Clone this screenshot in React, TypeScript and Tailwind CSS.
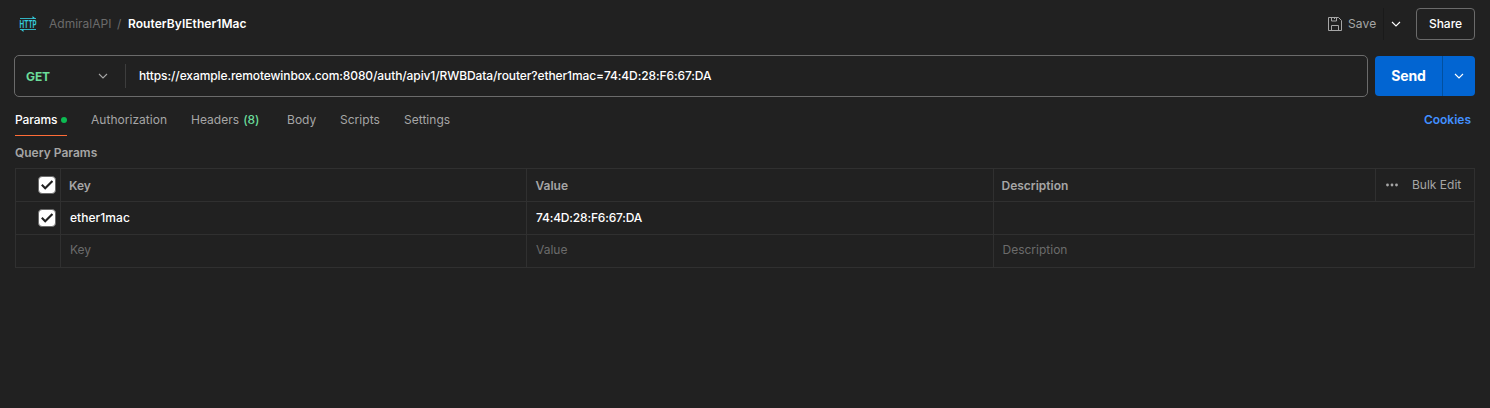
import React from 'react';

function Chevron({ className = '' }: { className?: string }) {
  return (
    <svg width="10" height="6" viewBox="0 0 10 6" fill="none" className={className}>
      <path d="M1 1l4 4 4-4" stroke="currentColor" strokeWidth="1.1" />
    </svg>
  );
}

function HttpIcon() {
  return (
    <svg width="18" height="18" viewBox="0 0 18 18" fill="none" className="overflow-visible text-[#35cbdc]">
      <path d="M1 3.5h16M1 14.5h16" stroke="currentColor" strokeWidth="1" opacity=".85" />
      <path d="M13.5 1l3 2.5h-3zM4.5 17l-3-2.5h3z" fill="currentColor" />
      <text x=".6" y="12.8" textLength="17" lengthAdjust="spacingAndGlyphs" fill="currentColor" fontSize="10.6" fontWeight="700" fontFamily="Inter, sans-serif">HTTP</text>
    </svg>
  );
}

function SaveIcon() {
  return (
    <svg width="14" height="14" viewBox="0 0 14 14" fill="none" stroke="#a6a6a6">
      <path d="M.5 .5h10l3 3v10H.5zM3.5 .5v3.5h5V.5M3.5 13.5v-5h7v5M6.5 .5v1.5" />
    </svg>
  );
}

function Checkbox() {
  return (
    <span role="checkbox" aria-checked="true" className="flex size-[18px] items-center justify-center rounded-[4px] border border-[#6b6b6b] bg-white">
      <svg width="12" height="10" viewBox="0 0 12 10" fill="none">
        <path d="M.8 4.8l3.4 3.4L11.4 1" stroke="#212121" strokeWidth="2.1" />
      </svg>
    </span>
  );
}

const tabs = [
  { label: 'Authorization', width: 'w-[100px]' },
  { label: 'Headers', count: 8, width: 'w-24' },
  { label: 'Body', width: 'w-[53px]' },
  { label: 'Scripts', width: 'w-16' },
  { label: 'Settings', width: 'w-16' },
];

export default function App() {
  return (
    <div className="h-[408px] w-[1490px] bg-[#212121] font-['Inter',sans-serif] text-xs text-[#a6a6a6]">
      <header className="flex h-12 items-center pr-[15px] pl-[19px]">
        <HttpIcon />
        <span className="ml-3 w-[68px] text-[#6b6b6b]">AdmiralAPI</span>
        <span className="w-[11px] text-[#6b6b6b]">/</span>
        <h1 className="font-semibold tracking-[0.05px] text-white">RouterByIEther1Mac</h1>
        <div className="ml-auto flex h-8 items-center">
          <SaveIcon />
          <span className="ml-1.5 w-[35px] tracking-[0.15px]">Save</span>
          <span className="h-8 w-px bg-[#1a1a1a]" />
          <Chevron className="mr-[15px] ml-[7px] text-white" />
          <button className="h-8 w-[59px] rounded-[4px] border border-[#6b6b6b] font-medium text-white">Share</button>
        </div>
      </header>

      <div className="flex items-center gap-[7px] pt-[7px] pl-3.5">
        <div className="flex h-[42px] w-[1354px] items-center rounded-[5px] border border-[#6b6b6b]">
          <span className="w-[83px] pt-px pl-[11px] font-bold tracking-[-0.1px] text-[#6bdd9a]">GET</span>
          <Chevron className="mr-[17px]" />
          <span className="h-6 w-px bg-[#3d3d3d]" />
          <span className="pl-[13px] font-medium tracking-[-0.1px] text-white">https://example.remotewinbox.com:8080/auth/apiv1/RWBData/router?ether1mac=74:4D:28:F6:67:DA</span>
        </div>
        <div className="flex h-10 w-[100px] items-center overflow-hidden rounded-[4px] bg-[#0265d2] text-white">
          <button className="w-[67px] text-sm font-bold tracking-[-0.15px]">Send</button>
          <span className="h-10 w-px bg-[#02509f]" />
          <Chevron className="ml-[11px]" />
        </div>
      </div>

      <nav className="flex h-[39px] items-end pr-[19px] pl-[15px]">
        <div className="mr-6 flex h-8 w-[52px] items-center justify-between border-b border-[#ff6c37] font-medium tracking-[-0.1px] text-white">
          Params
          <span className="size-1.5 rounded-full bg-[#0cbb52]" />
        </div>
        {tabs.map((tab) => (
          <div key={tab.label} className={`flex h-8 items-center border-b border-transparent tracking-[0.03px] ${tab.width}`}>
            {tab.label}
            {tab.count && <span className="ml-1 font-medium tracking-[-0.15px] text-[#6bdd9a]">({tab.count})</span>}
          </div>
        ))}
        <span className="ml-auto flex h-8 items-center border-b border-transparent font-semibold text-[#4290ff]">Cookies</span>
      </nav>

      <h2 className="flex h-8 items-center pt-0.5 pl-[15px] font-semibold">Query Params</h2>

      <div className="ml-[15px] grid w-[1460px] grid-cols-[45px_466px_467px_481px] grid-rows-[33px_33px_33px] border-t border-l border-[#303030] *:flex *:items-center *:border-r *:border-b *:border-[#303030]">
        <div className="pl-[22px]"><Checkbox /></div>
        <div className="pt-0.5 pl-2 font-semibold">Key</div>
        <div className="pt-0.5 pl-[8.5px] font-semibold">Value</div>
        <div className="justify-between pl-[7.5px] font-semibold">
          <span className="pt-0.5">Description</span>
          <div className="flex h-full w-[99px] items-center border-l border-[#303030] pl-2.5 font-normal">
            <svg width="12" height="4" viewBox="0 0 12 4" fill="#a6a6a6">
              <circle cx="1.5" cy="2" r="1.4" /><circle cx="6" cy="2" r="1.4" /><circle cx="10.5" cy="2" r="1.4" />
            </svg>
            <span className="ml-3.5">Bulk Edit</span>
          </div>
        </div>
        <div className="pl-[22px]"><Checkbox /></div>
        <div className="pl-[9px] font-medium tracking-[0.05px] text-white">ether1mac</div>
        <div className="pl-[9px] font-medium tracking-[-0.17px] text-white">74:4D:28:F6:67:DA</div>
        <div />
        <div />
        <div className="pb-0.5 pl-[9px] text-[#6b6b6b]">Key</div>
        <div className="pb-0.5 pl-[9px] text-[#6b6b6b]">Value</div>
        <div className="pb-0.5 pl-[8.5px] text-[#6b6b6b]">Description</div>
      </div>
    </div>
  );
}
